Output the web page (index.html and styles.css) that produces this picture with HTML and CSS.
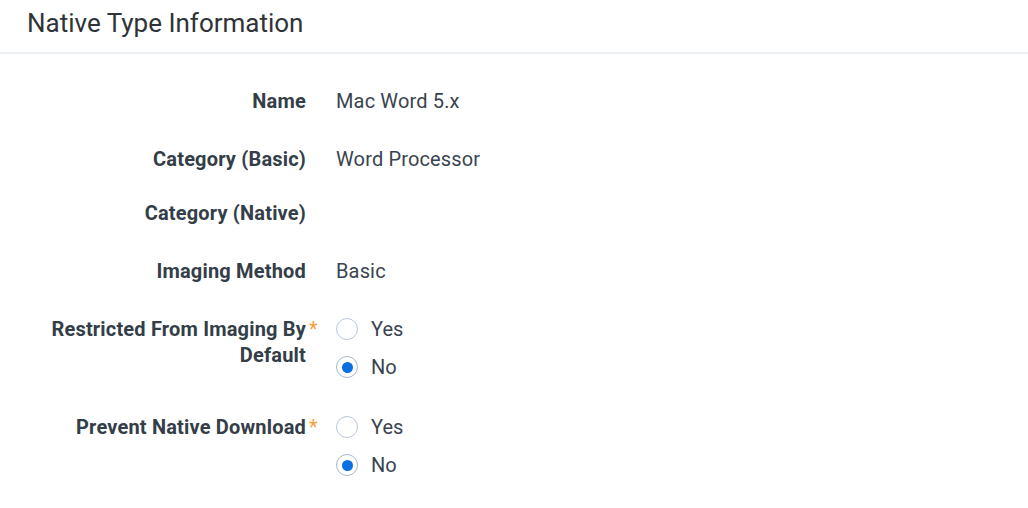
FILE: index.html
```html
<!DOCTYPE html>
<html lang="en">
<head>
<meta charset="utf-8">
<title>Native Type Information</title>
<link rel="stylesheet" href="styles.css">
</head>
<body>
<div class="panel">
  <header class="panel-header">
    <h1 class="panel-title">Native Type Information</h1>
  </header>
  <div class="form">
    <div class="row">
      <div class="label">Name</div>
      <div class="req"></div>
      <div class="value">Mac Word 5.x</div>
    </div>
    <div class="row">
      <div class="label">Category (Basic)</div>
      <div class="req"></div>
      <div class="value">Word Processor</div>
    </div>
    <div class="row">
      <div class="label">Category (Native)</div>
      <div class="req"></div>
      <div class="value empty"></div>
    </div>
    <div class="row">
      <div class="label">Imaging Method</div>
      <div class="req"></div>
      <div class="value">Basic</div>
    </div>
    <div class="row row-radio">
      <div class="label">Restricted From Imaging By Default</div>
      <div class="req">*</div>
      <div class="radios">
        <label class="radio"><span class="circle"></span><span class="radio-text">Yes</span></label>
        <label class="radio"><span class="circle checked"></span><span class="radio-text">No</span></label>
      </div>
    </div>
    <div class="row row-radio">
      <div class="label">Prevent Native Download</div>
      <div class="req">*</div>
      <div class="radios">
        <label class="radio"><span class="circle"></span><span class="radio-text">Yes</span></label>
        <label class="radio"><span class="circle checked"></span><span class="radio-text">No</span></label>
      </div>
    </div>
  </div>
</div>
</body>
</html>
```

FILE: styles.css
```css
html, body {
  margin: 0;
  padding: 0;
  background: #ffffff;
}

body {
  font-family: Roboto, "Liberation Sans", Arial, sans-serif;
  color: #333d47;
}

.panel-header {
  height: 52px;
  border-bottom: 2px solid #edf1f5;
  padding-left: 27px;
  display: flex;
  align-items: flex-start;
}

.panel-title {
  margin: 0;
  padding-top: 6px;
  font-size: 26px;
  line-height: 34px;
  font-weight: 400;
  color: #2f3337;
}

.form {
  padding-top: 30px;
  display: flex;
  flex-direction: column;
  gap: 28px;
}

.row {
  display: grid;
  grid-template-columns: 306px 30px 1fr;
  align-items: baseline;
  font-size: 20px;
  line-height: 26px;
}

.row-radio {
  align-items: start;
}

.row-radio .label,
.row-radio .req {
  padding-top: 4px;
}

.label {
  text-align: right;
  font-weight: 700;
  color: #333e48;
  letter-spacing: 0.18px;
}

.req {
  color: #f5a03a;
  padding-left: 3px;
  font-weight: 400;
}

.value {
  padding-top: 4px;
  color: #3a4450;
  min-height: 26px;
  letter-spacing: 0.15px;
}

.value.empty {
  padding-top: 0;
  min-height: 0;
}

.radios {
  display: flex;
  flex-direction: column;
  gap: 8px;
  padding-bottom: 2px;
}

.radio {
  display: flex;
  align-items: center;
  padding-top: 4px;
  height: 26px;
  color: #3a4450;
}

.circle {
  box-sizing: border-box;
  width: 22px;
  height: 22px;
  border-radius: 50%;
  border: 1.5px solid #b7c7da;
  background: #ffffff;
  display: flex;
  align-items: center;
  justify-content: center;
  margin-right: 13px;
  flex: none;
}

.circle.checked {
  border-color: #a9b8ca;
}

.circle.checked::after {
  content: "";
  width: 11px;
  height: 11px;
  border-radius: 50%;
  background: #0a6fe0;
}
```
